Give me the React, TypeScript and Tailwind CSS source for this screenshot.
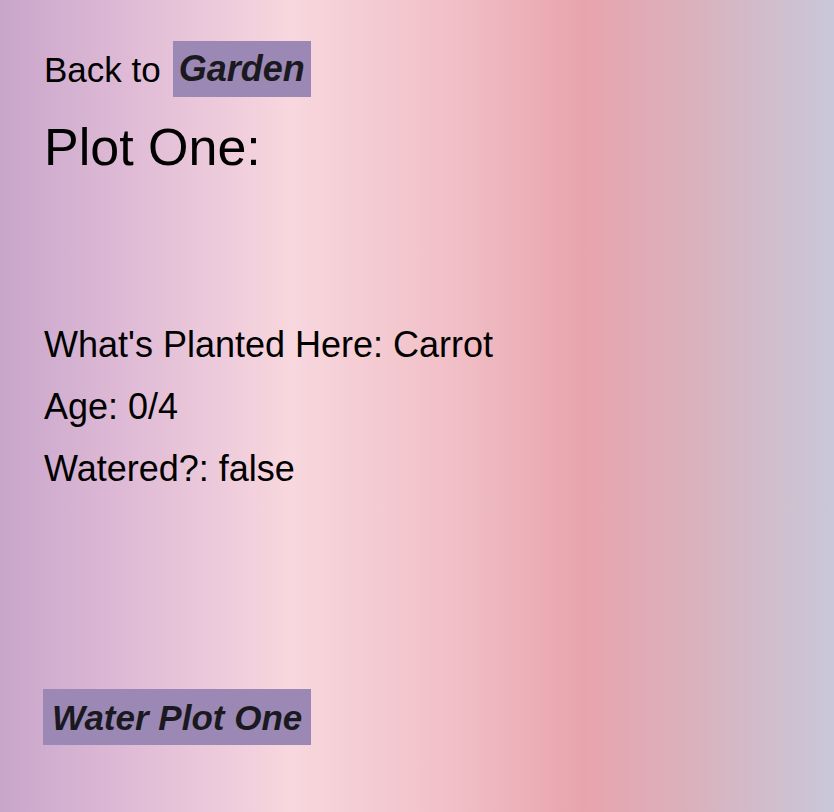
export default function App() {
  return (
    <div
      className="min-h-screen w-full bg-[linear-gradient(90deg,#c8a6cb_0%,#dfbad6_15%,#f8d7de_35%,#f1bec6_55%,#e8a4ad_70%,#dbb0bb_82%,#c9c7d9_100%)] pl-[44px] pt-[41px] text-black"
      style={{ fontFamily: '"Liberation Sans", Arial, sans-serif' }}
    >
      {/* back link */}
      <div className="flex h-[56px] items-center text-[35px] leading-none">
        <span>Back to</span>
        <a className="ml-[12px] flex h-[56px] items-center bg-[#9b88b5] px-[6px] text-[36px] font-bold italic text-[#1b1920]">
          Garden
        </a>
      </div>

      <h1 className="mt-[20px] text-[52px] leading-[60px]">Plot One:</h1>

      {/* plot info */}
      <div className="mt-[137px] text-[36px] leading-[62px]">
        <p>What's Planted Here: Carrot</p>
        <p>Age: 0/4</p>
        <p>Watered?: false</p>
      </div>

      <button className="-ml-px mt-[189px] flex h-[56px] items-center bg-[#9b88b5] px-[9px] text-[35px] font-bold italic leading-none text-[#1b1920]">
        Water Plot One
      </button>
    </div>
  )
}
